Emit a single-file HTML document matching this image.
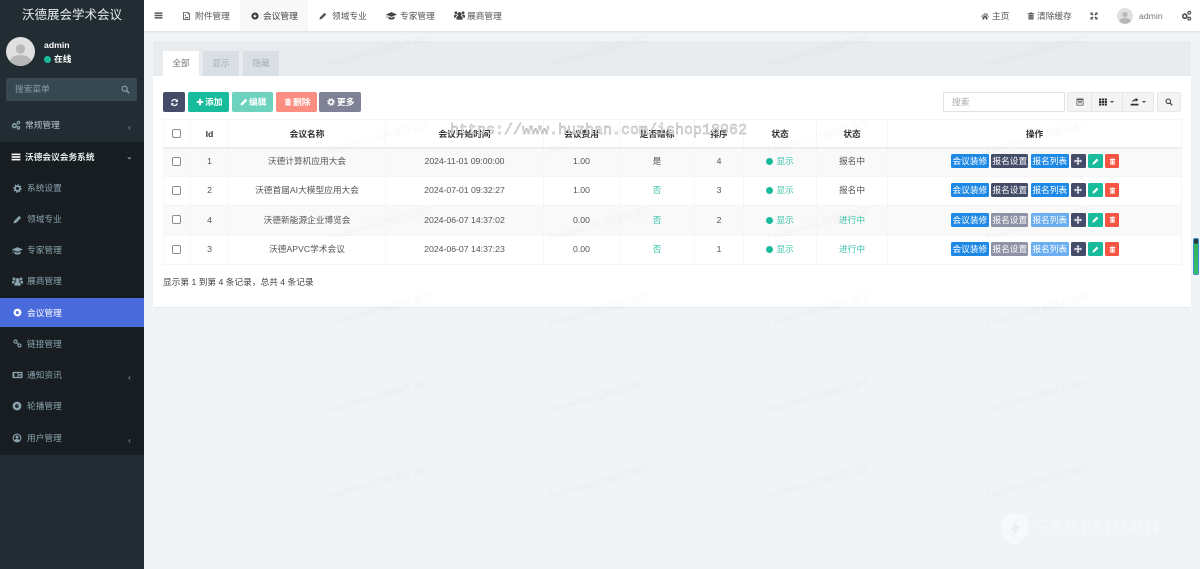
<!DOCTYPE html>
<html lang="zh"><head><meta charset="utf-8"><title>沃德展会学术会议</title>
<style>
*{box-sizing:border-box}
html,body{margin:0;padding:0;width:1200px;height:569px;overflow:hidden;background:#f1f4f6}
body{position:relative;font:8.7px/12px "Liberation Sans","Noto Sans CJK SC",sans-serif;color:#555;filter:blur(.3px)}
.a{position:absolute}
.t{position:absolute;white-space:nowrap;line-height:12px}
svg.i{position:absolute;fill:currentColor}
#side{position:absolute;left:0;top:0;width:144px;height:569px;background:#212d32;z-index:5}
#dark{position:absolute;left:0;top:142px;width:144px;height:313px;background:#171d21}
#side .m{color:#8aa4af}
#nav{position:absolute;left:144px;top:0;width:1056px;height:31px;background:#fff;box-shadow:0 1px 2px rgba(0,0,0,.09);z-index:3}
#tabs{position:absolute;left:153px;top:41px;width:1038px;height:35px;background:#e8ecef}
.tab{position:absolute;top:51px;width:36px;height:25px;text-align:center;line-height:25px;background:#d9dfe5;color:#a5adb5}
#panel{position:absolute;left:153px;top:76px;width:1038px;height:231px;background:#fff;box-shadow:0 1px 1px rgba(0,0,0,.05)}
.b{position:absolute;top:92px;height:20px;border-radius:2px;color:#fff;font-weight:bold;line-height:20px;white-space:nowrap}
table{position:absolute;left:163px;top:119px;width:1018px;border-collapse:collapse;table-layout:fixed}
th,td{border:1px solid #f6f6f6;text-align:center;padding:0;font-size:8.7px}
th{height:28px;color:#333;border-bottom:2px solid #eee;padding-top:2px}
td{color:#555;padding-bottom:2px}
tr.o td{background:#f9f9f9}
.g{color:#18bc9c}
td.g{color:#3cc4a9}
.c{display:block;width:9px;height:9px;border:1px solid #8c8c8c;border-radius:2px;background:#fff;margin:0 auto;position:relative;left:-.5px}
th .c{margin-top:-2px}
.d{display:inline-block;width:7px;height:7px;border-radius:50%;background:#18bc9c;margin-right:3px;vertical-align:-1px}
.ac{display:flex;gap:2.4px;padding-left:63px;align-items:center}
.ac span{display:block;height:14px;border-radius:1.5px;color:#fff;line-height:14px;text-align:center;position:relative;flex:none}
.bl{background:#1e88e5;width:37.7px}.nv{background:#444c69;width:37.4px}.nvf{background:#8e92a4;width:37.4px}.blf{background:#6aaeef;width:37.7px}
.wm{position:absolute;white-space:nowrap;transform:translate(-50%,-50%) rotate(-15deg);color:rgba(0,0,0,.03);font-size:9.8px;z-index:4;pointer-events:none}
#ov{position:absolute;left:450px;top:122px;font:15px/18px "Liberation Mono",monospace;color:#f0f0f0;-webkit-text-stroke:.4px #a0a0a0;z-index:6;white-space:nowrap}
</style></head><body>
<svg width="0" height="0" style="position:absolute"><defs>
<symbol id="bars" viewBox="0 0 16 16"><rect x="1" y="2.5" width="14" height="2.6"/><rect x="1" y="6.7" width="14" height="2.6"/><rect x="1" y="10.9" width="14" height="2.6"/></symbol>
<symbol id="gear" viewBox="0 0 16 16"><circle cx="8" cy="8" r="4.3" fill="none" stroke="currentColor" stroke-width="3"/><circle cx="8" cy="8" r="6.4" fill="none" stroke="currentColor" stroke-width="2.4" stroke-dasharray="2.5 2.5"/></symbol>
<symbol id="cogs" viewBox="0 0 16 16"><circle cx="5.5" cy="9" r="3" fill="none" stroke="currentColor" stroke-width="2.4"/><circle cx="12" cy="4" r="2" fill="none" stroke="currentColor" stroke-width="1.8"/><circle cx="12" cy="12.5" r="2" fill="none" stroke="currentColor" stroke-width="1.8"/></symbol>
<symbol id="pen" viewBox="0 0 16 16"><path d="M1 15l1-4.5L11 1.500l3.500 3.500-9 9z"/></symbol>
<symbol id="cap" viewBox="0 0 16 16"><path d="M0 6.500L8 3l8 3.500L8 10zM3.500 9.500L8 11.500l4.500-2V12.500c-2.500 1.800-6.500 1.800-9 0zM1 7.500h.8v4.500H1z"/></symbol>
<symbol id="users" viewBox="0 0 16 16"><circle cx="8" cy="6" r="3"/><circle cx="2.800" cy="4" r="2"/><circle cx="13.200" cy="4" r="2"/><path d="M3.500 14V11c0-1.500 1.500-2.500 4.500-2.500s4.500 1 4.500 2.500v3zM0 11V8.500C0 7.300 1 6.500 3.500 6.500L4.500 8C3 8.500 2.500 10 2.500 11zM16 11V8.500c0-1.200-1-2-3.500-2L11.500 8c1.500.5 2 2 2 3z"/></symbol>
<symbol id="disc" viewBox="0 0 16 16"><circle cx="8" cy="8" r="5" fill="none" stroke="currentColor" stroke-width="4"/><path d="M8 6.500a2 2 0 0 1 2 2" fill="none" stroke="currentColor"/></symbol>
<symbol id="link" viewBox="0 0 16 16"><circle cx="4.500" cy="4.500" r="2.800" fill="none" stroke="currentColor" stroke-width="2"/><circle cx="11.500" cy="11.500" r="2.800" fill="none" stroke="currentColor" stroke-width="2"/><path d="M6 6l4 4" stroke="currentColor" stroke-width="2"/></symbol>
<symbol id="news" viewBox="0 0 16 16"><path d="M0 3h16v10H0zM3 5v6h5V5zM9.500 5v1.300H14V5zM9.500 7.500v1.200H14V7.500zM9.500 9.800V11H14V9.800z" fill-rule="evenodd"/></symbol>
<symbol id="user" viewBox="0 0 16 16"><path d="M8 1a7 7 0 1 0 0 14A7 7 0 0 0 8 1zm0 1.800a5.200 5.200 0 0 1 4 8.500c-.8-1-2-1.500-4-1.500s-3.200.5-4 1.500A5.200 5.200 0 0 1 8 2.800z" fill-rule="evenodd"/><circle cx="8" cy="6.500" r="2.400"/></symbol>
<symbol id="img" viewBox="0 0 16 16"><path d="M2 1h9l3 3v11H2zM3.500 2.500v11h9V5H10V2.500z" fill-rule="evenodd"/><path d="M4.500 12l2.500-3 1.500 1.500 1.500-1 1.500 2.500z"/><circle cx="6" cy="6.500" r="1.200"/></symbol>
<symbol id="home" viewBox="0 0 16 16"><path d="M8 2L0 9l1 1 7-6 7 6 1-1-3-2.600V3h-2v1.700zM3 10.500L8 6l5 4.500V15H9.500v-3.500h-3V15H3z"/></symbol>
<symbol id="trash" viewBox="0 0 16 16"><path d="M6 1h4l1 1.500h3.500V4.500h-13V2.500H5zM3 5.500h10V15H3zM5.500 7.500v5.500h1V7.500zM9.500 7.500v5.500h1V7.500z" fill-rule="evenodd"/></symbol>
<symbol id="exp" viewBox="0 0 16 16"><path d="M1 1h5L4.500 2.500 7 5 5 7 2.500 4.500 1 6zM15 1v5l-1.500-1.500L11 7 9 5l2.500-2.500L10 1zM1 15v-5l1.500 1.500L5 9l2 2-2.500 2.500L6 15zM15 15h-5l1.500-1.500L9 11l2-2 2.500 2.500L15 10z"/></symbol>
<symbol id="plus" viewBox="0 0 16 16"><path d="M6 1.500h4V6h4.500v4H10v4.500H6V10H1.500V6H6z"/></symbol>
<symbol id="move" viewBox="0 0 16 16"><path d="M8 0l3 3H9.200v3.800H13V5l3 3-3 3V9.200H9.200V13H11l-3 3-3-3h1.800V9.200H3V11L0 8l3-3v1.800h3.800V3H5z"/></symbol>
<symbol id="ref" viewBox="0 0 16 16"><path d="M14 2v5H9l2-2a4 4 0 0 0-6.700 1.500H2A6.200 6.200 0 0 1 12.500 3.500zM2 14V9h5l-2 2a4 4 0 0 0 6.700-1.500H14A6.200 6.200 0 0 1 3.500 12.500z"/></symbol>
<symbol id="sea" viewBox="0 0 16 16"><circle cx="6.500" cy="6.500" r="4.500" fill="none" stroke="currentColor" stroke-width="2"/><path d="M10 10l4.500 4.500" stroke="currentColor" stroke-width="2.400"/></symbol>
<symbol id="tbl" viewBox="0 0 16 16"><path d="M1 1h14v14H1zM2.500 4.500v9h11v-9z" fill-rule="evenodd"/><rect x="4" y="6" width="8" height="1.500"/><rect x="4" y="9" width="8" height="1.500"/></symbol>
<symbol id="grid" viewBox="0 0 16 16"><path d="M0 1h4.500v4H0zM5.700 1h4.500v4H5.700zM11.500 1H16v4h-4.500zM0 6h4.500v4H0zM5.700 6h4.500v4H5.700zM11.500 6H16v4h-4.500zM0 11h4.500v4H0zM5.700 11h4.500v4H5.700zM11.500 11H16v4h-4.500z"/></symbol>
<symbol id="exportI" viewBox="0 0 16 16"><path d="M1 12h14v3H1zM4 10c0-4 2-6 6-6V1.500L15 5l-5 3.500V6.500C7 6.500 5.500 8 4 10z"/></symbol>
<symbol id="av" viewBox="0 0 28 28"><circle cx="14" cy="14" r="14" fill="#e0e0e0"/><circle cx="14" cy="11.500" r="4.500" fill="#b8b8b8"/><path d="M3.500 23c2-4 5.500-5.500 10.500-5.500S22.500 19 24.500 23a14 14 0 0 1-21 0z" fill="#b8b8b8"/></symbol>
</defs></svg>

<div id="side">
<div class="t" style="left:22px;top:7px;font-size:12.5px;line-height:16px;color:#e8eced">沃德展会学术会议</div>
<svg class="i" style="left:6px;top:37px" width="29" height="29"><use href="#av"/></svg>
<div class="t" style="left:44px;top:39px;color:#fff;font-weight:bold">admin</div>
<div class="a" style="left:44px;top:56px;width:7px;height:7px;border-radius:50%;background:#18bc9c"></div>
<div class="t" style="left:54px;top:53px;color:#fff;font-weight:bold">在线</div>
<div class="a" style="left:6px;top:78px;width:131px;height:23px;background:#374850;border-radius:2px"></div>
<div class="t m" style="left:15px;top:83px;color:#8a9ca5">搜索菜单</div>
<svg class="i" style="left:121px;top:85px;color:#8aa4af" width="9" height="9"><use href="#sea"/></svg>
<svg class="i m" style="left:11px;top:120px" width="10" height="10"><use href="#cogs"/></svg>
<div class="t" style="left:25px;top:119px;color:#b8c7ce">常规管理</div>
<div class="t m" style="left:128px;top:121px">‹</div>
<div id="dark"></div>
<svg class="i" style="left:11px;top:152px;color:#fff" width="10" height="10"><use href="#bars"/></svg>
<div class="t" style="left:25px;top:151px;color:#e6ecee;font-weight:bold">沃德会议会务系统</div>
<div class="t" style="left:127px;top:152px;color:#c5d0d5;transform:rotate(-90deg)">‹</div>
<svg class="i m" style="left:13px;top:184px" width="9" height="9"><use href="#gear"/></svg><div class="t m" style="left:27px;top:182px">系统设置</div>
<svg class="i m" style="left:13px;top:215px" width="9" height="9"><use href="#pen"/></svg><div class="t m" style="left:27px;top:213px">领域专业</div>
<svg class="i m" style="left:12px;top:245px" width="11" height="11"><use href="#cap"/></svg><div class="t m" style="left:27px;top:244px">专家管理</div>
<svg class="i m" style="left:12px;top:276px" width="11" height="11"><use href="#users"/></svg><div class="t m" style="left:27px;top:275px">展商管理</div>
<div class="a" style="left:0;top:298px;width:144px;height:29px;background:#4a6bdc"></div>
<svg class="i" style="left:13px;top:308px;color:#fff" width="9" height="9"><use href="#disc"/></svg><div class="t" style="left:27px;top:307px;color:#fff">会议管理</div>
<svg class="i m" style="left:13px;top:339px" width="9" height="9"><use href="#link"/></svg><div class="t m" style="left:27px;top:338px">链接管理</div>
<svg class="i m" style="left:12px;top:370px" width="11" height="10"><use href="#news"/></svg><div class="t m" style="left:27px;top:369px">通知资讯</div><div class="t m" style="left:128px;top:371px">‹</div>
<svg class="i m" style="left:12px;top:401px" width="10" height="10"><use href="#disc"/></svg><div class="t m" style="left:27px;top:400px">轮播管理</div>
<svg class="i m" style="left:12px;top:433px" width="10" height="10"><use href="#user"/></svg><div class="t m" style="left:27px;top:432px">用户管理</div><div class="t m" style="left:128px;top:434px">‹</div>
</div>

<div id="nav">
<svg class="i" style="left:10px;top:11px;color:#555" width="9" height="9"><use href="#bars"/></svg>
<div class="a" style="left:96px;top:0;width:68px;height:31px;background:#f8f8f8"></div>
<svg class="i" style="left:38px;top:11px;color:#555" width="9" height="10"><use href="#img"/></svg><div class="t" style="left:51px;top:10px">附件管理</div>
<svg class="i" style="left:107px;top:12px;color:#333" width="8" height="8"><use href="#disc"/></svg><div class="t" style="left:119px;top:10px;color:#444">会议管理</div>
<svg class="i" style="left:175px;top:12px;color:#555" width="8" height="8"><use href="#pen"/></svg><div class="t" style="left:188px;top:10px">领域专业</div>
<svg class="i" style="left:242px;top:10px;color:#444" width="11" height="11"><use href="#cap"/></svg><div class="t" style="left:256px;top:10px">专家管理</div>
<svg class="i" style="left:310px;top:10px;color:#444" width="11" height="11"><use href="#users"/></svg><div class="t" style="left:323px;top:10px">展商管理</div>
<svg class="i" style="left:837px;top:12px;color:#555" width="8" height="8"><use href="#home"/></svg><div class="t" style="left:848px;top:10px">主页</div>
<svg class="i" style="left:883px;top:12px;color:#555" width="8" height="8"><use href="#trash"/></svg><div class="t" style="left:893px;top:10px">清除缓存</div>
<svg class="i" style="left:946px;top:12px;color:#444" width="8" height="8"><use href="#exp"/></svg>
<svg class="i" style="left:973px;top:8px" width="16" height="16"><use href="#av"/></svg>
<div class="t" style="left:995px;top:10px;color:#777">admin</div>
<svg class="i" style="left:1037px;top:10px;color:#555" width="11" height="11"><use href="#cogs"/></svg>
</div>

<div id="tabs"></div>
<div class="tab" style="left:163px;background:#fff;color:#777;box-sizing:border-box">全部</div>
<div class="tab" style="left:203px">显示</div>
<div class="tab" style="left:243px">隐藏</div>
<div id="panel"></div>

<div class="b" style="left:163px;width:22px;background:#444c69"><svg class="i" style="left:6.500px;top:5.500px" width="9" height="9"><use href="#ref"/></svg></div>
<div class="b" style="left:188px;width:41px;background:#18bc9c"><svg class="i" style="left:8px;top:6px" width="8" height="8"><use href="#plus"/></svg><span class="a" style="left:17px">添加</span></div>
<div class="b" style="left:232px;width:41px;background:#6dd3bf"><svg class="i" style="left:8px;top:6px" width="8" height="8"><use href="#pen"/></svg><span class="a" style="left:17px">编辑</span></div>
<div class="b" style="left:276px;width:41px;background:#fb8e80"><svg class="i" style="left:8px;top:6px" width="8" height="8"><use href="#trash"/></svg><span class="a" style="left:17px">删除</span></div>
<div class="b" style="left:319px;width:42px;background:#7f8296"><svg class="i" style="left:8px;top:6px" width="8" height="8"><use href="#gear"/></svg><span class="a" style="left:18px">更多</span></div>

<div class="a" style="left:943px;top:92px;width:122px;height:20px;background:#fff;border:1px solid #e2e2e2;border-radius:1px;color:#aaa;line-height:18px;padding-left:8px">搜索</div>
<div class="a" style="left:1067px;top:92px;width:87px;height:20px;background:#f4f4f4;border:1px solid #e8e8e8;border-radius:2px"></div>
<div class="a" style="left:1091px;top:92px;width:1px;height:20px;background:#e4e4e4"></div>
<div class="a" style="left:1122px;top:92px;width:1px;height:20px;background:#e4e4e4"></div>
<svg class="i" style="left:1076px;top:98px;color:#555" width="8" height="8"><use href="#tbl"/></svg>
<svg class="i" style="left:1099px;top:98px;color:#333" width="8" height="8"><use href="#grid"/></svg>
<div class="a" style="left:1110px;top:101px;border:2.500px solid transparent;border-top-color:#444;border-bottom:0"></div>
<svg class="i" style="left:1130px;top:97px;color:#333" width="9" height="9"><use href="#exportI"/></svg>
<div class="a" style="left:1142px;top:101px;border:2.500px solid transparent;border-top-color:#444;border-bottom:0"></div>
<div class="a" style="left:1157px;top:92px;width:24px;height:20px;background:#f4f4f4;border:1px solid #e8e8e8;border-radius:2px"></div>
<svg class="i" style="left:1165px;top:98px;color:#333" width="8" height="8"><use href="#sea"/></svg>

<table>
<colgroup><col style="width:27px"><col style="width:38px"><col style="width:157px"><col style="width:158px"><col style="width:76px"><col style="width:75px"><col style="width:49px"><col style="width:73px"><col style="width:71px"><col style="width:294px"></colgroup>
<tr><th><i class="c"></i></th><th>Id</th><th>会议名称</th><th>会议开始时间</th><th>会议费用</th><th>是否赠标</th><th>排序</th><th>状态</th><th>状态</th><th>操作</th></tr>
<tr class="o" style="height:29px"><td><i class="c"></i></td><td>1</td><td>沃德计算机应用大会</td><td>2024-11-01 09:00:00</td><td>1.00</td><td>是</td><td>4</td><td class="g"><i class="d"></i>显示</td><td>报名中</td><td><div class="ac"><span class="bl">会议装修</span><span class="nv">报名设置</span><span class="bl">报名列表</span><span style="background:#444c69;width:15px"><svg class="i" style="left:3.500px;top:3px" width="8" height="8"><use href="#move"/></svg></span><span style="background:#18bc9c;width:14.400px"><svg class="i" style="left:3.500px;top:3.500px" width="7" height="7"><use href="#pen"/></svg></span><span style="background:#f75444;width:14px"><svg class="i" style="left:3.500px;top:3.500px" width="7" height="7"><use href="#trash"/></svg></span></div></td></tr>
<tr style="height:29px"><td><i class="c"></i></td><td>2</td><td>沃德首届AI大模型应用大会</td><td>2024-07-01 09:32:27</td><td>1.00</td><td class="g">否</td><td>3</td><td class="g"><i class="d"></i>显示</td><td>报名中</td><td><div class="ac"><span class="bl">会议装修</span><span class="nv">报名设置</span><span class="bl">报名列表</span><span style="background:#444c69;width:15px"><svg class="i" style="left:3.500px;top:3px" width="8" height="8"><use href="#move"/></svg></span><span style="background:#18bc9c;width:14.400px"><svg class="i" style="left:3.500px;top:3.500px" width="7" height="7"><use href="#pen"/></svg></span><span style="background:#f75444;width:14px"><svg class="i" style="left:3.500px;top:3.500px" width="7" height="7"><use href="#trash"/></svg></span></div></td></tr>
<tr class="o" style="height:30px"><td><i class="c"></i></td><td>4</td><td>沃德新能源企业博览会</td><td>2024-06-07 14:37:02</td><td>0.00</td><td class="g">否</td><td>2</td><td class="g"><i class="d"></i>显示</td><td class="g">进行中</td><td><div class="ac"><span class="bl">会议装修</span><span class="nvf">报名设置</span><span class="blf">报名列表</span><span style="background:#444c69;width:15px"><svg class="i" style="left:3.500px;top:3px" width="8" height="8"><use href="#move"/></svg></span><span style="background:#18bc9c;width:14.400px"><svg class="i" style="left:3.500px;top:3.500px" width="7" height="7"><use href="#pen"/></svg></span><span style="background:#f75444;width:14px"><svg class="i" style="left:3.500px;top:3.500px" width="7" height="7"><use href="#trash"/></svg></span></div></td></tr>
<tr style="height:29px"><td><i class="c"></i></td><td>3</td><td>沃德APVC学术会议</td><td>2024-06-07 14:37:23</td><td>0.00</td><td class="g">否</td><td>1</td><td class="g"><i class="d"></i>显示</td><td class="g">进行中</td><td><div class="ac"><span class="bl">会议装修</span><span class="nvf">报名设置</span><span class="blf">报名列表</span><span style="background:#444c69;width:15px"><svg class="i" style="left:3.500px;top:3px" width="8" height="8"><use href="#move"/></svg></span><span style="background:#18bc9c;width:14.400px"><svg class="i" style="left:3.500px;top:3.500px" width="7" height="7"><use href="#pen"/></svg></span><span style="background:#f75444;width:14px"><svg class="i" style="left:3.500px;top:3.500px" width="7" height="7"><use href="#trash"/></svg></span></div></td></tr>
</table>
<div class="t" style="left:163px;top:276px;color:#444">显示第 1 到第 4 条记录，总共 4 条记录</div>

<div class="wm" style="left:380px;top:52px">FastAdmin应用插件演示</div><div class="wm" style="left:600px;top:52px">FastAdmin应用插件演示</div><div class="wm" style="left:819px;top:52px">FastAdmin应用插件演示</div><div class="wm" style="left:1038px;top:52px">FastAdmin应用插件演示</div>
<div class="wm" style="left:380px;top:138px">FastAdmin应用插件演示</div><div class="wm" style="left:600px;top:138px">FastAdmin应用插件演示</div><div class="wm" style="left:819px;top:138px">FastAdmin应用插件演示</div><div class="wm" style="left:1038px;top:138px">FastAdmin应用插件演示</div>
<div class="wm" style="left:380px;top:225px">FastAdmin应用插件演示</div><div class="wm" style="left:600px;top:225px">FastAdmin应用插件演示</div><div class="wm" style="left:819px;top:225px">FastAdmin应用插件演示</div><div class="wm" style="left:1038px;top:225px">FastAdmin应用插件演示</div>
<div class="wm" style="left:380px;top:311px">FastAdmin应用插件演示</div><div class="wm" style="left:600px;top:311px">FastAdmin应用插件演示</div><div class="wm" style="left:819px;top:311px">FastAdmin应用插件演示</div><div class="wm" style="left:1038px;top:311px">FastAdmin应用插件演示</div>
<div class="wm" style="left:380px;top:397px">FastAdmin应用插件演示</div><div class="wm" style="left:600px;top:397px">FastAdmin应用插件演示</div><div class="wm" style="left:819px;top:397px">FastAdmin应用插件演示</div><div class="wm" style="left:1038px;top:397px">FastAdmin应用插件演示</div>
<div class="wm" style="left:380px;top:483px">FastAdmin应用插件演示</div><div class="wm" style="left:600px;top:483px">FastAdmin应用插件演示</div><div class="wm" style="left:819px;top:483px">FastAdmin应用插件演示</div><div class="wm" style="left:1038px;top:483px">FastAdmin应用插件演示</div>

<svg class="a" style="left:1000px;top:512px;z-index:4;opacity:.4" width="30" height="34" viewBox="0 0 30 34"><path d="M15 1C7 1 1 7 1 15c0 9 7 15 14 18 7-3 14-9 14-18C29 7 23 1 15 1z" fill="#fff"/><path d="M17 7l-7 11h4l-2 8 8-12h-4z" fill="#e8ecef"/></svg>
<div class="t" style="left:1038px;top:518px;font-size:19px;line-height:20px;color:#fff;opacity:.35;letter-spacing:1.700px;z-index:4">FASTADMIN</div>

<div id="ov">https://www.huzhan.com/ishop18962</div>
<div class="a" style="left:1193px;top:238px;width:6px;height:37px;background:linear-gradient(#2a3a3a 0,#2a3a3a 12%,#2fb35a 14%,#37c06a 100%);border:1px solid #3d8fd0;border-radius:2px;z-index:6"></div>
</body></html>
